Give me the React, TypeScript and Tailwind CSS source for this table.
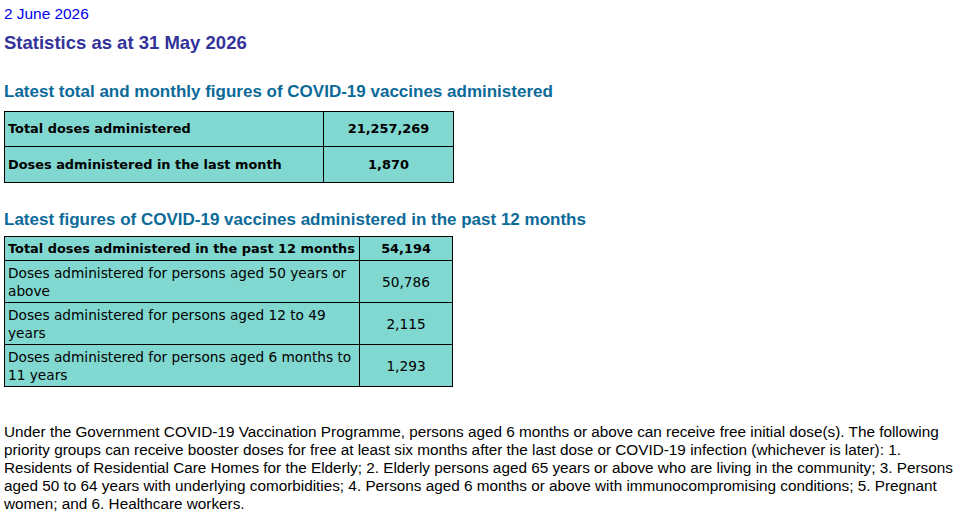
const tdBase = "border border-black px-[3px]";

export default function App() {
  const ageRows = [
    { label: "Doses administered for persons aged 50 years or above", value: "50,786" },
    { label: "Doses administered for persons aged 12 to 49 years", value: "2,115" },
    { label: "Doses administered for persons aged 6 months to 11 years", value: "1,293" },
  ];

  return (
    <div className="bg-white min-h-screen px-[4px] pt-[5px] font-['Liberation_Sans',Arial,sans-serif] text-black">
      <p className="text-[15.4px] leading-[18px] text-[#0000ee]">2 June 2026</p>
      <h1 className="mt-[9px] text-[18.5px] leading-[22px] font-bold text-[#333399]">
        Statistics as at 31 May 2026
      </h1>

      <h2 className="mt-[28px] text-[17px] leading-[20px] font-bold text-[#0b6a99]">
        Latest total and monthly figures of COVID-19 vaccines administered
      </h2>
      <table className="mt-[9px] border-collapse bg-[#80d8d0] font-['DejaVu_Sans',Verdana,sans-serif] text-[12.9px] font-bold">
        <tbody>
          <tr className="h-[35px]">
            <td className={`${tdBase} w-[319px]`}>Total doses administered</td>
            <td className={`${tdBase} w-[130px] text-center`}>21,257,269</td>
          </tr>
          <tr className="h-[36px]">
            <td className={tdBase}>Doses administered in the last month</td>
            <td className={`${tdBase} text-center`}>1,870</td>
          </tr>
        </tbody>
      </table>

      <h2 className="mt-[27px] text-[17px] leading-[20px] font-bold text-[#0b6a99]">
        Latest figures of COVID-19 vaccines administered in the past 12 months
      </h2>
      <table className="mt-[6px] w-[449px] table-fixed border-collapse bg-[#80d8d0] font-['DejaVu_Sans',Verdana,sans-serif] text-[13.7px] leading-[18px]">
        <tbody>
          <tr className="h-[24px] font-bold text-[12.9px]">
            <td className={`${tdBase} w-[355px] whitespace-nowrap`}>Total doses administered in the past 12 months</td>
            <td className={`${tdBase} text-center`}>54,194</td>
          </tr>
          {ageRows.map((row) => (
            <tr key={row.value} className="h-[42px]">
              <td className={tdBase}>{row.label}</td>
              <td className={`${tdBase} text-center`}>{row.value}</td>
            </tr>
          ))}
        </tbody>
      </table>

      <p className="mt-[36px] text-[15.3px] leading-[18px] pr-[10px]">
        Under the Government COVID-19 Vaccination Programme, persons aged 6 months or above can receive free initial
        dose(s). The following priority groups can receive booster doses for free at least six months after the last
        dose or COVID-19 infection (whichever is later): 1. Residents of Residential Care Homes for the Elderly; 2.
        Elderly persons aged 65 years or above who are living in the community; 3. Persons aged 50 to 64 years with
        underlying comorbidities; 4. Persons aged 6 months or above with immunocompromising conditions; 5. Pregnant
        women; and 6. Healthcare workers.
      </p>
    </div>
  );
}
